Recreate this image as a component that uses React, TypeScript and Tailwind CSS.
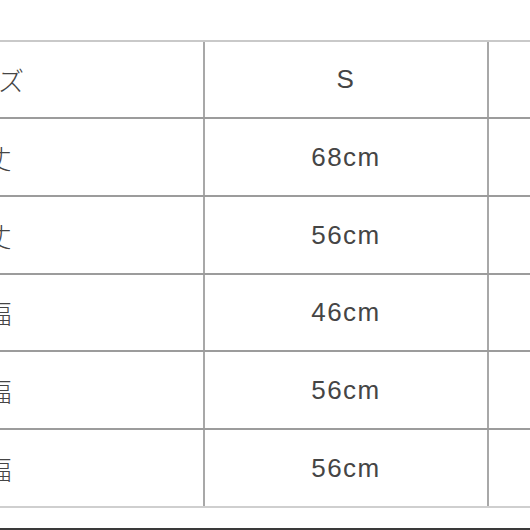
import React from 'react';

interface SizeRow {
    label: string;
    s: string;
    m: string;
    h: string;
}

// row heights include the 2px bottom rule
const rows: SizeRow[] = [
    { label: 'サイズ', s: 'S', m: 'M', h: 'h-[77px]' },
    { label: '着丈', s: '68cm', m: '70cm', h: 'h-[78px]' },
    { label: '袖丈', s: '56cm', m: '58cm', h: 'h-[78px]' },
    { label: '身幅', s: '46cm', m: '48cm', h: 'h-[77px]' },
    { label: '肩幅', s: '56cm', m: '58cm', h: 'h-[78px]' },
    { label: '袖幅', s: '56cm', m: '58cm', h: 'h-[78px]' },
];

const App: React.FC = () => {
    return (
        <div className="w-[530px] h-[530px] overflow-hidden bg-white flex flex-col text-[#454545]">
            <div className="mt-[40px] ml-[-232px] w-[1100px] border-t-2 border-[#c9c9c9]">
                {rows.map((row, i) => (
                    <div
                        key={row.label}
                        className={`flex ${row.h} border-b-2 ${i === rows.length - 1 ? 'border-[#cfcfcf]' : 'border-[#9c9c9c]'}`}
                    >
                        <div className="w-[437px] shrink-0 flex items-center justify-center border-r-2 border-[#a8a8a8] text-[26px] font-['Noto_Sans_CJK_JP',sans-serif] font-light">
                            {row.label}
                        </div>
                        <div className="w-[284px] shrink-0 flex items-center justify-center border-r-2 border-[#a8a8a8] text-[26px] tracking-[1.5px] font-['Liberation_Sans',Arial,sans-serif]">
                            {row.s}
                        </div>
                        <div className="w-[284px] shrink-0 flex items-center justify-center text-[26px] tracking-[1.5px] font-['Liberation_Sans',Arial,sans-serif]">
                            {row.m}
                        </div>
                    </div>
                ))}
            </div>
            <div className="mt-auto h-[2px] bg-[#3a3a3a]" />
        </div>
    );
};

export default App;
